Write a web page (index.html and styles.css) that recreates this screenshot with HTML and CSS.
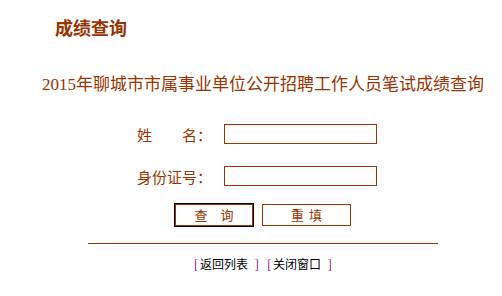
FILE: index.html
```html
<!DOCTYPE html>
<html lang="zh-CN">
<head>
<meta charset="utf-8">
<title>成绩查询</title>
<link rel="stylesheet" href="styles.css">
</head>
<body>
<div class="page">
  <h1 class="title">成绩查询</h1>
  <div class="main">
    <p class="subtitle"><span class="num">2015</span>年聊城市市属事业单位公开招聘工作人员笔试成绩查询</p>
    <form class="form">
      <div class="row">
        <label class="label">姓　　名：</label>
        <input class="field" type="text">
      </div>
      <div class="row">
        <label class="label">身份证号：</label>
        <input class="field" type="text">
      </div>
      <div class="buttons">
        <button type="button" class="btn btn-query"><span>查</span><span class="gap-wide"></span><span>询</span></button>
        <button type="reset" class="btn btn-reset"><span>重</span><span class="gap-narrow"></span><span>填</span></button>
      </div>
    </form>
    <hr class="rule">
    <div class="links">
      <span class="link"><span class="br">[</span><span class="txt">返回列表</span><span class="br">]</span></span>
      <span class="link"><span class="br">[</span><span class="txt">关闭窗口</span><span class="br">]</span></span>
    </div>
  </div>
</div>
</body>
</html>
```
FILE: styles.css
```css
html, body {
  margin: 0;
  padding: 0;
  background: #ffffff;
}
body {
  font-family: "Noto Sans CJK SC", "Liberation Sans", sans-serif;
  color: #993300;
}
.page {
  width: 502px;
  height: 296px;
  overflow: hidden;
}
.title {
  margin: 0;
  padding: 18px 0 0 55px;
  font-size: 18px;
  line-height: 18px;
  font-weight: bold;
  color: #993300;
}
.main {
  margin-left: 24px;
  width: 478px;
}
.subtitle {
  margin: 38px 0 0 0;
  font-size: 17px;
  line-height: 17px;
  text-align: center;
  white-space: nowrap;
  color: #993300;
}
.num {
  font-family: "Liberation Serif", serif;
}
.form {
  margin: 31px 0 0 0;
  display: flex;
  flex-direction: column;
  align-items: center;
}
.row {
  display: flex;
  align-items: center;
  height: 20px;
  padding-right: 12px;
  margin-bottom: 22px;
}
.label {
  width: 87px;
  font-size: 15px;
  line-height: 15px;
  color: #993300;
}
.field {
  box-sizing: border-box;
  width: 153px;
  height: 20px;
  margin: 0;
  padding: 0 2px;
  border: 1px solid #993300;
  background: #ffffff;
  outline: none;
}
.buttons {
  display: flex;
  gap: 9px;
  margin-top: -4px;
}
.btn {
  box-sizing: border-box;
  height: 22px;
  margin: 0;
  padding: 0;
  background: #ffffff;
  border: 1px solid #993300;
  font-family: "Noto Sans CJK SC", sans-serif;
  font-size: 13px;
  line-height: 18px;
  color: #993300;
  display: flex;
  align-items: center;
  justify-content: center;
}
.gap-wide {
  display: inline-block;
  width: 13px;
}
.gap-narrow {
  display: inline-block;
  width: 5px;
}
.btn-query {
  width: 78px;
  border: 1px solid #993300;
  box-shadow: 0 0 0 1px #000000;
  outline: none;
}
.btn-reset {
  width: 89px;
}
.rule {
  width: 350px;
  margin: 17px 0 0 64px;
  border: 0;
  height: 1px;
  background: #993300;
}
.links {
  margin-top: 13px;
  display: flex;
  justify-content: center;
  gap: 8px;
  font-size: 12px;
  line-height: 14px;
  color: #000000;
}
.link {
  display: flex;
  align-items: center;
}
.txt {
  margin: 0 7px 0 2px;
}
.br {
  color: #800080;
}
```
